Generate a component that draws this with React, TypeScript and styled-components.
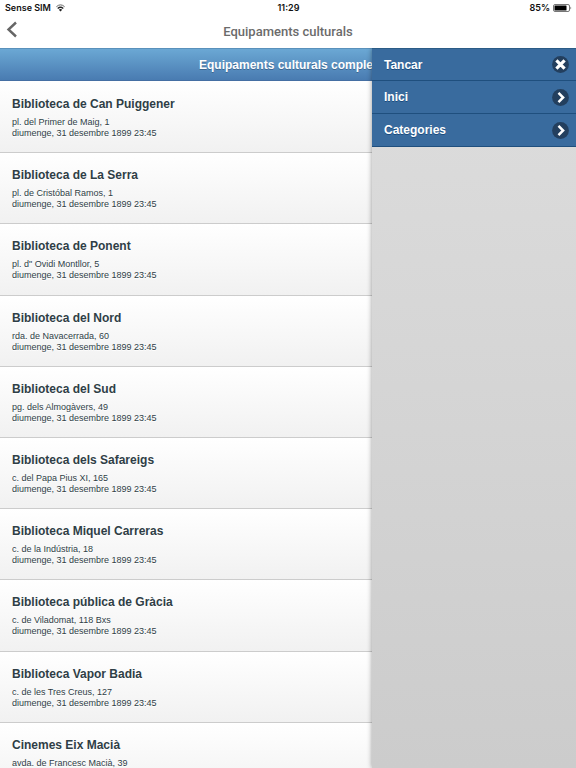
import React from "react";
import styled, { createGlobalStyle } from "styled-components";

const GlobalStyle = createGlobalStyle`
  *, *::before, *::after { box-sizing: border-box; }
  body {
    margin: 0;
    background: #fff;
    font-family: "Liberation Sans", Arial, sans-serif;
  }
`;

const Shell = styled.div`
  display: flex;
  flex-direction: column;
  height: 100vh;
  overflow: hidden;
`;

const StatusBar = styled.div`
  display: grid;
  grid-template-columns: 1fr auto 1fr;
  align-items: center;
  height: 16px;
  padding: 0 4px 0 5px;
  flex: none;
  font: 600 9px/16px Inter, sans-serif;
  color: #111;
`;

const StatusGroup = styled.div<{ $end?: boolean }>`
  display: flex;
  align-items: center;
  justify-content: ${(p) => (p.$end ? "flex-end" : "flex-start")};
  gap: ${(p) => (p.$end ? "3px" : "5px")};
`;

const NavBar = styled.header`
  display: grid;
  grid-template-columns: 24px 1fr 24px;
  align-items: center;
  height: 32px;
  flex: none;
`;

const BackButton = styled.button`
  display: flex;
  align-items: flex-start;
  height: 32px;
  padding: 5px 0 0 6px;
  border: 0;
  background: none;
  color: #666;
`;

const NavTitle = styled.h1`
  margin: 0;
  text-align: center;
  font: 500 13px/32px Roboto, sans-serif;
  color: #6b6b6b;
`;

const Content = styled.main`
  position: relative;
  flex: 1;
  min-height: 0;
  overflow: hidden;
`;

const Banner = styled.h2`
  margin: 0 0 1px;
  height: 33px;
  border-top: 1px solid #5a91bb;
  border-bottom: 1px solid #456fa3;
  background: linear-gradient(#6ba8d4, #497bb1);
  color: #fff;
  text-align: center;
  text-shadow: 0 1px 0 #3e6790;
  font-size: 12px;
  line-height: 32px;
`;

const List = styled.ul`
  display: grid;
  grid-auto-rows: minmax(71px, 1fr);
  min-height: 712px;
  margin: 0;
  padding: 0;
  list-style: none;
`;

const Row = styled.li`
  padding: 14px 12px 0;
  border-bottom: 1px solid #ccc;
  background: linear-gradient(#fff, #f1f1f1);
  color: #2f3e46;
  text-shadow: 0 1px 0 #fff;
`;

const RowTitle = styled.h3`
  margin: 0 0 5px;
  font-size: 12px;
  line-height: 16px;
`;

const RowText = styled.p`
  margin: 0;
  font-size: 9px;
  line-height: 11px;
`;

const Panel = styled.aside`
  position: absolute;
  top: 0;
  right: 0;
  bottom: 0;
  width: 204px;
  background: linear-gradient(#dddddd, #cccccc);
  box-shadow: 0 0 5px rgba(0, 0, 0, 0.4);
`;

const MenuButton = styled.button`
  display: flex;
  align-items: center;
  justify-content: space-between;
  width: 100%;
  height: 33px;
  padding: 0 7px 0 12px;
  border: 0;
  border-bottom: 1px solid #1f4f7e;
  background: #396b9e;
  color: #fff;
  text-align: left;
  text-shadow: 0 1px 0 #194b7e;
  font: bold 12px/16px "Liberation Sans", Arial, sans-serif;

  &:first-child { border-top: 1px solid #2b5c86; }
`;

const places = [
  ["Biblioteca de Can Puiggener", "pl. del Primer de Maig, 1"],
  ["Biblioteca de La Serra", "pl. de Cristóbal Ramos, 1"],
  ["Biblioteca de Ponent", "pl. d\" Ovidi Montllor, 5"],
  ["Biblioteca del Nord", "rda. de Navacerrada, 60"],
  ["Biblioteca del Sud", "pg. dels Almogàvers, 49"],
  ["Biblioteca dels Safareigs", "c. del Papa Pius XI, 165"],
  ["Biblioteca Miquel Carreras", "c. de la Indústria, 18"],
  ["Biblioteca pública de Gràcia", "c. de Viladomat, 118 Bxs"],
  ["Biblioteca Vapor Badia", "c. de les Tres Creus, 127"],
  ["Cinemes Eix Macià", "avda. de Francesc Macià, 39"],
];

const WifiIcon = () => (
  <svg width="9" height="8" viewBox="0 0 9 8" fill="none" stroke="#222" aria-hidden="true">
    <path d="M.4 2.7Q4.5-1 8.6 2.7" stroke="#666" />
    <path d="M1.7 4.5Q4.5 2 7.3 4.5" strokeWidth="1.2" />
    <path d="M2.8 5.7Q4.5 4.4 6.2 5.7L4.5 7.6Z" fill="#222" stroke="none" />
  </svg>
);

const BatteryIcon = () => (
  <svg width="19" height="8" viewBox="0 0 19 8" aria-hidden="true">
    <rect x=".5" y=".5" width="16" height="7" rx="1.5" fill="#fff" stroke="#777" />
    <rect x="1.5" y="1.5" width="12" height="5" rx=".5" fill="#000" />
    <path d="M17.5 2.5Q19 4 17.5 5.5Z" fill="#444" />
  </svg>
);

const MenuIcon = ({ close }: { close?: boolean }) => (
  <svg width="17" height="17" viewBox="0 0 17 17" fill="none" aria-hidden="true">
    <circle cx="8.5" cy="8.5" r="8.4" fill="#233f5e" />
    {close ? (
      <path d="M4.4 4.4L12.6 12.6M12.6 4.4L4.4 12.6" stroke="#fff" strokeWidth="3.2" />
    ) : (
      <path d="M6.5 3.9L11.1 8.5L6.5 13.1" stroke="#fff" strokeWidth="2.5" />
    )}
  </svg>
);

export default function App() {
  return (
    <Shell>
      <GlobalStyle />
      <StatusBar>
        <StatusGroup>
          <span>Sense SIM</span>
          <WifiIcon />
        </StatusGroup>
        <span>11:29</span>
        <StatusGroup $end>
          <span>85%</span>
          <BatteryIcon />
        </StatusGroup>
      </StatusBar>
      <NavBar>
        <BackButton type="button" aria-label="Enrere">
          <svg width="12" height="17" viewBox="0 0 12 17" fill="none" stroke="currentColor" strokeWidth="2.4">
            <path d="M10 1.5L2.5 8.5L10 15.5" />
          </svg>
        </BackButton>
        <NavTitle>Equipaments culturals</NavTitle>
      </NavBar>
      <Content>
        <Banner>Equipaments culturals complet</Banner>
        <List>
          {places.map(([name, address]) => (
            <Row key={name}>
              <RowTitle>{name}</RowTitle>
              <RowText>{address}</RowText>
              <RowText>diumenge, 31 desembre 1899 23:45</RowText>
            </Row>
          ))}
        </List>
        <Panel>
          <MenuButton type="button">Tancar<MenuIcon close /></MenuButton>
          <MenuButton type="button">Inici<MenuIcon /></MenuButton>
          <MenuButton type="button">Categories<MenuIcon /></MenuButton>
        </Panel>
      </Content>
    </Shell>
  );
}
